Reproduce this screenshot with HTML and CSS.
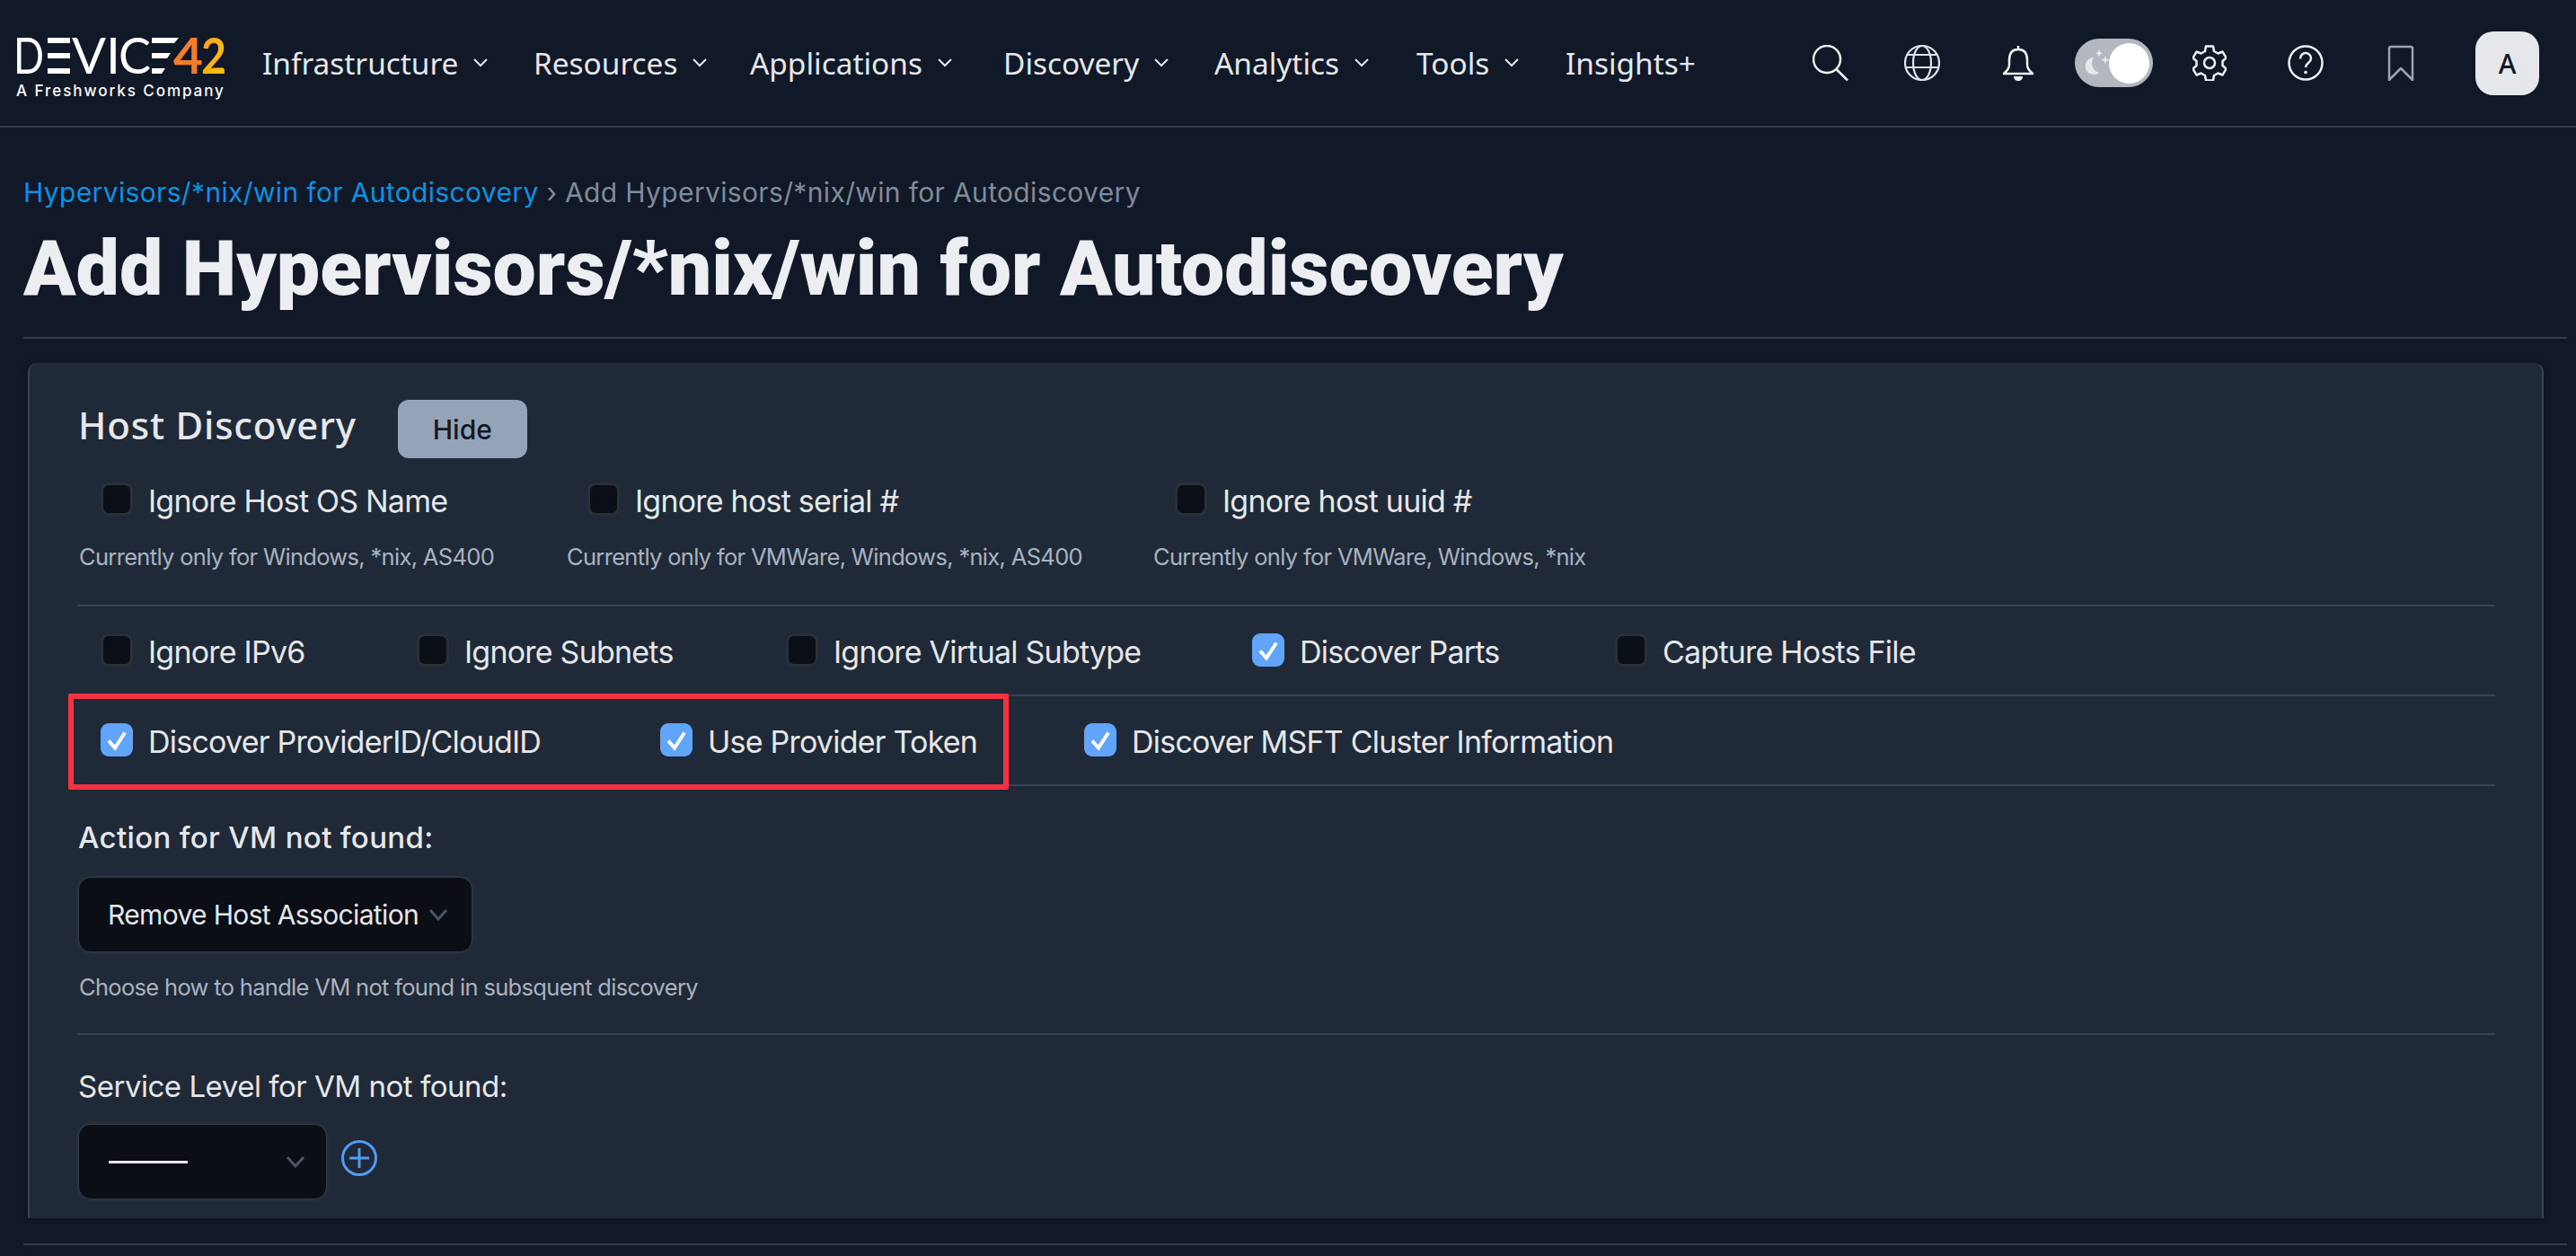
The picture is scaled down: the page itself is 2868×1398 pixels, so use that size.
FILE: index.html
```html
<!DOCTYPE html>
<html lang="en">
<head>
<meta charset="utf-8">
<title>Add Hypervisors/*nix/win for Autodiscovery</title>
<link rel="stylesheet" href="styles.css">
</head>
<body>
<header class="topbar">
  <a class="brand">
    <svg class="logo" width="244" height="76" viewBox="-4 -20 244 76">
      <defs><linearGradient id="two" x1="0" y1="0" x2="1" y2="1"><stop offset="0" stop-color="#f79a1e"/><stop offset="1" stop-color="#ffc90a"/></linearGradient></defs>
      <text class="logo-text" x="-3" y="41" textLength="34" lengthAdjust="spacingAndGlyphs">D</text>
      <g class="logo-bars"><rect x="35" y="1" width="25" height="6"/><rect x="35" y="18" width="25" height="6"/><rect x="35" y="35" width="25" height="6"/></g>
      <text class="logo-text" x="62" y="41" textLength="38" lengthAdjust="spacingAndGlyphs">V</text>
      <text class="logo-text" x="100" y="41" textLength="16" lengthAdjust="spacingAndGlyphs">I</text>
      <text class="logo-text" x="114" y="41" textLength="36" lengthAdjust="spacingAndGlyphs">C</text>
      <g class="logo-bars"><polygon points="151,1 181,1 176,7 151,7"/><polygon points="151,18 172,18 168,24 151,24"/><polygon points="151,35 166,35 162,41 151,41"/></g>
      <text class="logo-four" x="175" y="41" textLength="33" lengthAdjust="spacingAndGlyphs">4</text>
      <text class="logo-two" x="206" y="41" textLength="28" lengthAdjust="spacingAndGlyphs" fill="url(#two)">2</text>
    </svg>
    <span class="brand-sub">A Freshworks Company</span>
  </a>
  <nav class="nav">
    <a class="nav-item">Infrastructure <svg class="nav-chev" viewBox="0 0 16 10"><path d="M1 1l7 7 7-7"/></svg></a>
    <a class="nav-item">Resources <svg class="nav-chev" viewBox="0 0 16 10"><path d="M1 1l7 7 7-7"/></svg></a>
    <a class="nav-item">Applications <svg class="nav-chev" viewBox="0 0 16 10"><path d="M1 1l7 7 7-7"/></svg></a>
    <a class="nav-item">Discovery <svg class="nav-chev" viewBox="0 0 16 10"><path d="M1 1l7 7 7-7"/></svg></a>
    <a class="nav-item">Analytics <svg class="nav-chev" viewBox="0 0 16 10"><path d="M1 1l7 7 7-7"/></svg></a>
    <a class="nav-item">Tools <svg class="nav-chev" viewBox="0 0 16 10"><path d="M1 1l7 7 7-7"/></svg></a>
    <a class="nav-item">Insights+</a>
  </nav>
  <div class="tools">
    <svg class="tool" width="40" height="40" viewBox="0 0 40 40"><circle cx="16" cy="16" r="15"/><path d="M26.500 27L39 39.500"/></svg>
    <svg class="tool tool-globe" width="40" height="42" viewBox="0 0 40 42"><circle cx="20" cy="21" r="19"/><ellipse cx="20" cy="21" rx="10" ry="19"/><path d="M3 12h34M2 26h36"/></svg>
    <svg class="tool tool-bell" width="36" height="40" viewBox="0 0 36 40"><path d="M18 1v4M18 5c-7 0-10 5-10 12v5c0 4-2 6-6 10h32c-4-4-6-6-6-10v-5c0-7-3-12-10-12z"/><path class="fill" d="M13 35h10c0 3-2 5-5 5s-5-2-5-5z"/></svg>
    <div class="toggle">
      <svg class="toggle-moon" width="30" height="30" viewBox="0 0 30 30"><path d="M11 9a9.500 9.500 0 1 0 6 17 11 11 0 0 1-6-17z"/><path d="M17 0l1.200 3 3 1.200-3 1.200-1.200 3-1.200-3-3-1.200 3-1.200zM24 7l1.300 3.500 3.500 1.300-3.500 1.300-1.300 3.500-1.300-3.500-3.500-1.300 3.500-1.300z"/></svg>
      <span class="toggle-knob"></span>
    </div>
    <svg class="tool" width="38" height="40" viewBox="0 0 38 40"><path d="M15 1.500h8l1 5.500 4.500 2.500 5-2 4 7-4 3.500v5l4 3.500-4 7-5-2-4.500 2.500-1 5.500h-8l-1-5.500-4.500-2.500-5 2-4-7 4-3.500v-5l-4-3.500 4-7 5 2 4.500-2.500z"/><circle cx="19" cy="20" r="6"/></svg>
    <svg class="tool" width="40" height="40" viewBox="0 0 40 40"><circle cx="20" cy="20" r="18.500"/><path d="M14 15.500c0-4 3-6.500 6-6.500s6 2.500 6 6c0 5-6 5-6 10"/><circle class="fill" cx="20" cy="30.500" r="1.800"/></svg>
    <svg class="tool tool-mark" width="30" height="40" viewBox="0 0 30 40"><path d="M2 39V4q0-2 2-2h22q2 0 2 2v35L15 26z"/></svg>
    <div class="avatar">A</div>
  </div>
</header>

<main class="page">
  <div class="crumbs"><a class="crumb-link">Hypervisors/*nix/win for Autodiscovery</a> › Add Hypervisors/*nix/win for Autodiscovery</div>
  <h1 class="title">Add Hypervisors/*nix/win for Autodiscovery</h1>

  <section class="panel">
    <div class="panel-head">
      <h2 class="panel-title">Host Discovery</h2>
      <button class="hide-btn">Hide</button>
    </div>

    <div class="group group-a">
      <div class="cols cols-a">
        <label class="check"><span class="box"></span>Ignore Host OS Name</label>
        <label class="check"><span class="box"></span>Ignore host serial #</label>
        <label class="check"><span class="box"></span>Ignore host uuid #</label>
      </div>
      <div class="cols cols-hints">
        <p class="hint">Currently only for Windows, *nix, AS400</p>
        <p class="hint">Currently only for VMWare, Windows, *nix, AS400</p>
        <p class="hint">Currently only for VMWare, Windows, *nix</p>
      </div>
    </div>

    <div class="group group-b">
      <div class="cols cols-b">
        <label class="check"><span class="box"></span>Ignore IPv6</label>
        <label class="check"><span class="box"></span>Ignore Subnets</label>
        <label class="check"><span class="box"></span>Ignore Virtual Subtype</label>
        <label class="check"><span class="box on"><svg viewBox="0 0 36 36"><path d="M9 19l7 8 11-17"/></svg></span>Discover Parts</label>
        <label class="check"><span class="box"></span>Capture Hosts File</label>
      </div>
    </div>

    <div class="group group-c">
      <div class="cols cols-c">
        <label class="check"><span class="box on"><svg viewBox="0 0 36 36"><path d="M9 19l7 8 11-17"/></svg></span>Discover ProviderID/CloudID</label>
        <label class="check"><span class="box on"><svg viewBox="0 0 36 36"><path d="M9 19l7 8 11-17"/></svg></span>Use Provider Token</label>
        <label class="check"><span class="box on"><svg viewBox="0 0 36 36"><path d="M9 19l7 8 11-17"/></svg></span>Discover MSFT Cluster Information</label>
      </div>
      <div class="redbox"></div>
    </div>

    <div class="group group-d">
      <div class="field-label field-action">Action for VM not found:</div>
      <div class="select select-wide"><span>Remove Host Association</span><svg class="sel-chev" viewBox="0 0 22 14"><path d="M2 2l9 10 9-10"/></svg></div>
      <p class="hint hint-choose">Choose how to handle VM not found in subsquent discovery</p>
    </div>

    <div class="group-e">
      <div class="field-label field-service">Service Level for VM not found:</div>
      <div class="select-row">
        <div class="select select-small"><span class="dash"></span><svg class="sel-chev" viewBox="0 0 22 14"><path d="M2 2l9 10 9-10"/></svg></div>
        <svg class="plus" width="40" height="40" viewBox="0 0 40 40"><circle cx="20" cy="20" r="18.500"/><path d="M20 9v22M9 20h22"/></svg>
      </div>
    </div>
  </section>
  <div class="foot-rule"></div>
</main>
</body>
</html>
```

FILE: styles.css
```css
* { box-sizing: border-box; }
html, body { margin: 0; height: 1398px; overflow: hidden; }
body { background: #111827; color: #e5e7eb; font-family: "Noto Sans", sans-serif; }

.topbar { height: 142px; display: flex; border-bottom: 2px solid #343b4b; }
.brand { width: 292px; padding: 21px 0 0 14px; display: block; }
.logo { display: block; }
.logo-text { font: 400 56px "Lato", sans-serif; fill: #fff; }
.logo-bars { fill: #fff; }
.logo-four { font: 700 56px "Lato", sans-serif; fill: #f47b2a; }
.logo-two { font: 700 56px "Lato", sans-serif; }
.brand-sub { display: block; margin: -7px 0 0 4px; font: 500 17px/22px "Inter", sans-serif; letter-spacing: 1.950px; color: #fff; white-space: nowrap; }

.nav { display: grid; grid-template-columns: 302px 241px 282px 235px 225px 166px auto; height: 140px; align-items: center; width: 1726px; }
.nav-item { font-size: 33.400px; color: #e5e7eb; display: flex; align-items: center; white-space: pre; }
.nav-chev { width: 16px; height: 10px; margin-left: 8px; fill: none; stroke: #e5e7eb; stroke-width: 2; }

.tools { display: grid; grid-template-columns: 102px 109px 81px 131px 106px 111px 98px 71px; align-items: center; height: 140px; }
.tool { fill: none; stroke: #eef0f3; stroke-width: 2.500; stroke-linejoin: round; }
.tool .fill { fill: #eef0f3; stroke: none; }
.tool-globe { stroke: #dfe2e7; stroke-width: 2.200; }
.tool-mark { stroke: #9ca3af; }
.toggle { width: 87px; height: 54px; border-radius: 27px; background: #b3b8c0; display: flex; align-items: center; justify-content: flex-end; padding-right: 4px; position: relative; }
.toggle-moon { position: absolute; left: 10px; top: 12px; fill: #e6e8eb; }
.toggle-knob { width: 45px; height: 45px; border-radius: 50%; background: #fff; }
.avatar { width: 71px; height: 71px; border-radius: 20px; background: #e5e7eb; color: #111827; font: 500 30px "Noto Sans", sans-serif; display: flex; align-items: center; justify-content: center; }

.page { padding: 0 10px 0 26px; }
.crumbs { margin-top: 52px; font: 400 30px/40px "Inter", sans-serif; letter-spacing: 0.350px; color: #7f8c9a; white-space: nowrap; }
.crumb-link { color: #0c93e0; }
.title { margin: 14px 0 0; font: 900 86px/102px "Roboto", sans-serif; color: #eceef2; height: 129px; white-space: nowrap; border-bottom: 2px solid #343b4b; }

.panel { margin: 27px 0 0 5px; width: 2801px; height: 952px; background: #202937; border-radius: 10px 10px 0 0; border-left: 2px solid #3a4352; border-right: 2px solid #3a4352; padding: 41px 0 0 54px; box-shadow: 0 0 6px rgba(0,0,0,.25); }
.panel-head { display: flex; align-items: center; gap: 46px; height: 65px; }
.panel-title { margin: 0; padding-bottom: 9px; font: 500 42px/52px "Noto Sans", sans-serif; letter-spacing: 0.800px; color: #e5e7eb; }
.hide-btn { width: 144px; height: 65px; border: 0; border-radius: 12px; background: #94a3b8; color: #111827; font: 500 30px "Inter", sans-serif; padding: 0; }

.group { width: 2692px; border-bottom: 2px solid #3a4352; margin-left: -1px; padding-left: 1px; position: relative; }
.cols { display: grid; align-items: center; }
.group-a { height: 165px; padding-top: 25px; }
.cols-a { grid-template-columns: 542px 654px auto; padding-left: 25px; height: 42px; }
.cols-hints { grid-template-columns: 543px 653px auto; margin-top: 23px; height: 40px; padding-left: 1px; }
.cols-b { grid-template-columns: 352px 411px 519px 404px auto; padding-left: 25px; height: 100px; }
.cols-c { grid-template-columns: 623px 472px auto; padding-left: 25px; height: 100px; }
.group-b, .group-c { height: 100px; }

.check { display: flex; align-items: center; gap: 17px; padding-top: 2px; font: 400 34px/40px "Inter", sans-serif; letter-spacing: -0.780px; color: #e5e7eb; white-space: nowrap; }
.box { width: 36px; height: 37px; border-radius: 9px; background: #0b0f17; border: 3px solid #2b2f38; display: block; flex: none; margin-bottom: 5px; }
.box.on { background: #60a5fa; border: 0; }
.box svg { display: block; width: 36px; height: 37px; fill: none; stroke: #fff; stroke-width: 4; }

.redbox { position: absolute; left: -10px; top: -3px; width: 1047px; height: 107px; border: 6px solid #f5323f; border-radius: 2px; }

.hint { margin: 0; font: 400 25.500px/40px "Inter", sans-serif; letter-spacing: -0.680px; color: #a9b3c0; white-space: nowrap; }

.group-d { height: 277px; padding-top: 36px; }
.field-label { font: 500 33px/42px "Inter", sans-serif; color: #e5e7eb; }
.field-action { letter-spacing: 0.350px; }
.field-service { font-weight: 400; letter-spacing: -0.480px; }
.select { height: 84px; border-radius: 14px; background: #0b0e15; border: 1px solid #333a47; box-shadow: 0 0 4px rgba(255,255,255,.08); display: flex; align-items: center; justify-content: space-between; color: #e5e7eb; font: 400 30px "Inter", sans-serif; letter-spacing: -0.650px; }
.select-wide { width: 439px; margin-top: 23px; padding: 0 26px 0 32px; }
.select-small { width: 277px; padding: 0 23px 0 33px; }
.sel-chev { width: 22px; height: 14px; fill: none; stroke: #4b5563; stroke-width: 3; }
.hint-choose { margin-top: 19px; padding-left: 1px; }
.dash { width: 88px; height: 3px; background: #e5e7eb; display: block; }
.group-e { padding-top: 36px; }
.select-row { display: flex; align-items: center; gap: 16px; margin-top: 21px; }
.plus { fill: none; stroke: #4f9cf5; stroke-width: 3; margin-top: -8px; }
.foot-rule { margin-top: 28px; height: 2px; background: #343b4b; }
```
